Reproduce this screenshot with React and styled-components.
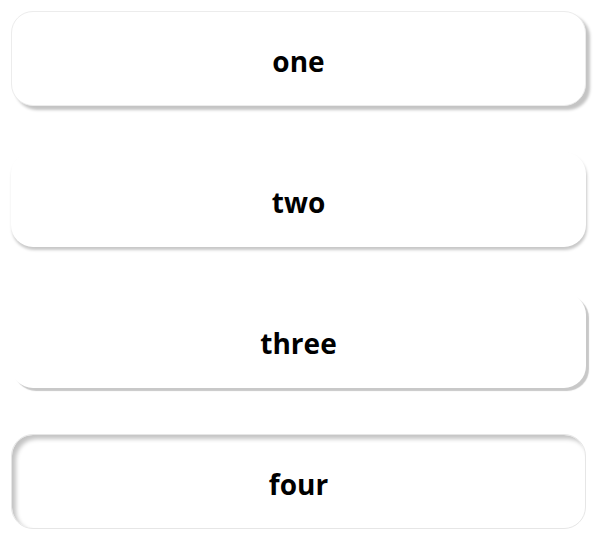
import React from "react";
import styled, { createGlobalStyle, css } from "styled-components";

const Global = createGlobalStyle`
  html, body { margin: 0; padding: 0; background: #fff; }
  body { font-family: "Open Sans", "Noto Sans", sans-serif; }
`;

const List = styled.div`
  display: flex;
  flex-direction: column;
  gap: 46px;
  padding: 11px 12px 0 11px;
`;

const variants = {
  one: css`
    border: 1px solid #ececec;
    box-shadow: 4px 4px 3px #c4c4c4;
  `,
  two: css`
    border: 1px solid transparent;
    box-shadow: 1px 3px 3px #c8c8c8;
  `,
  three: css`
    border: 1px solid transparent;
    box-shadow: 3px 3px 1px #c8c8c8;
  `,
  four: css`
    border: 1px solid #e6e6e6;
    box-shadow: inset 4px 4px 4px #c4c4c4;
  `,
};

const Card = styled.div`
  box-sizing: border-box;
  height: 95px;
  border-radius: 22px;
  background: #fff;
  display: flex;
  align-items: center;
  justify-content: center;
  font-size: 28px;
  font-weight: 700;
  color: #000;
  ${(p) => variants[p.$variant]}
`;

const Label = styled.span`
  position: relative;
  top: 2px;
`;

const items = ["one", "two", "three", "four"];

export default function App() {
  return (
    <>
      <Global />
      <List>
        {items.map((t) => (
          <Card key={t} $variant={t}>
            <Label>{t}</Label>
          </Card>
        ))}
      </List>
    </>
  );
}
